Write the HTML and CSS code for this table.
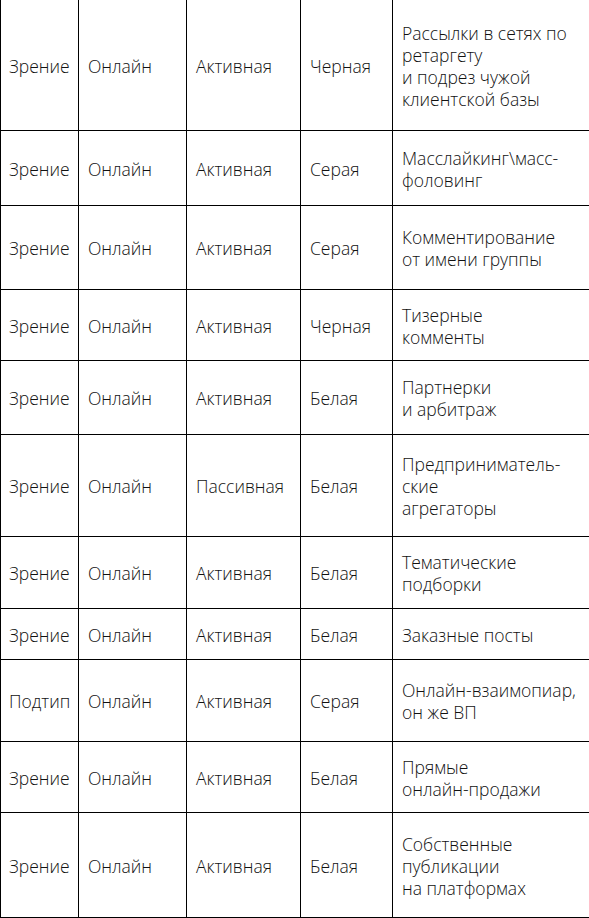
FILE: index.html
```html
<!DOCTYPE html>
<html lang="ru">
<head>
<meta charset="utf-8">
<link rel="stylesheet" href="styles.css">
</head>
<body>
<table class="grid">
  <colgroup>
    <col class="c1"><col class="c2"><col class="c3"><col class="c4"><col class="c5">
  </colgroup>
  <tbody>
    <tr class="r1"><td>Зрение</td><td>Онлайн</td><td>Активная</td><td>Черная</td><td>Рассылки в сетях по<br>ретаргету<br>и подрез чужой<br>клиентской базы</td></tr>
    <tr class="r2"><td>Зрение</td><td>Онлайн</td><td>Активная</td><td>Серая</td><td>Масслайкинг\масс-<br>фоловинг</td></tr>
    <tr class="r3"><td>Зрение</td><td>Онлайн</td><td>Активная</td><td>Серая</td><td>Комментирование<br>от имени группы</td></tr>
    <tr class="r4"><td>Зрение</td><td>Онлайн</td><td>Активная</td><td>Черная</td><td>Тизерные<br>комменты</td></tr>
    <tr class="r5"><td>Зрение</td><td>Онлайн</td><td>Активная</td><td>Белая</td><td>Партнерки<br>и арбитраж</td></tr>
    <tr class="r6"><td>Зрение</td><td>Онлайн</td><td>Пассивная</td><td>Белая</td><td>Предприниматель-<br>ские<br>агрегаторы</td></tr>
    <tr class="r7"><td>Зрение</td><td>Онлайн</td><td>Активная</td><td>Белая</td><td>Тематические<br>подборки</td></tr>
    <tr class="r8"><td>Зрение</td><td>Онлайн</td><td>Активная</td><td>Белая</td><td>Заказные посты</td></tr>
    <tr class="r9"><td>Подтип</td><td>Онлайн</td><td>Активная</td><td>Серая</td><td>Онлайн-взаимопиар,<br>он же ВП</td></tr>
    <tr class="r10"><td>Зрение</td><td>Онлайн</td><td>Активная</td><td>Белая</td><td>Прямые<br>онлайн-продажи</td></tr>
    <tr class="r11"><td>Зрение</td><td>Онлайн</td><td>Активная</td><td>Белая</td><td>Собственные<br>публикации<br>на платформах</td></tr>
  </tbody>
</table>
</body>
</html>
```

FILE: styles.css
```css
html, body {
  margin: 0;
  padding: 0;
  background: #fff;
}

.grid {
  border-collapse: collapse;
  table-layout: fixed;
  width: 589px;
  margin-top: -1px;
  font-family: "Open Sans", "Noto Sans", sans-serif;
  font-size: 17.5px;
  font-weight: 360;
  line-height: 22px;
  color: #111;
}

.c1 { width: 78px; }
.c2 { width: 108px; }
.c3 { width: 114px; }
.c4 { width: 92px; }
.c5 { width: 197px; }

.grid td {
  border: 1px solid #000;
  padding: 1px 4px 0 9px;
  vertical-align: middle;
  box-sizing: border-box;
  white-space: nowrap;
  overflow: hidden;
}

.grid td:first-child {
  padding-left: 8px;
  padding-right: 0;
}

.r1 { height: 131px; }
.r2 { height: 75px; }
.r3 { height: 84px; }
.r4 { height: 71px; }
.r5 { height: 74px; }
.r6 { height: 102px; }
.r7 { height: 72px; }
.r8 { height: 51px; }
.r9 { height: 82px; }
.r10 { height: 71px; }
.r11 { height: 105px; }
```
